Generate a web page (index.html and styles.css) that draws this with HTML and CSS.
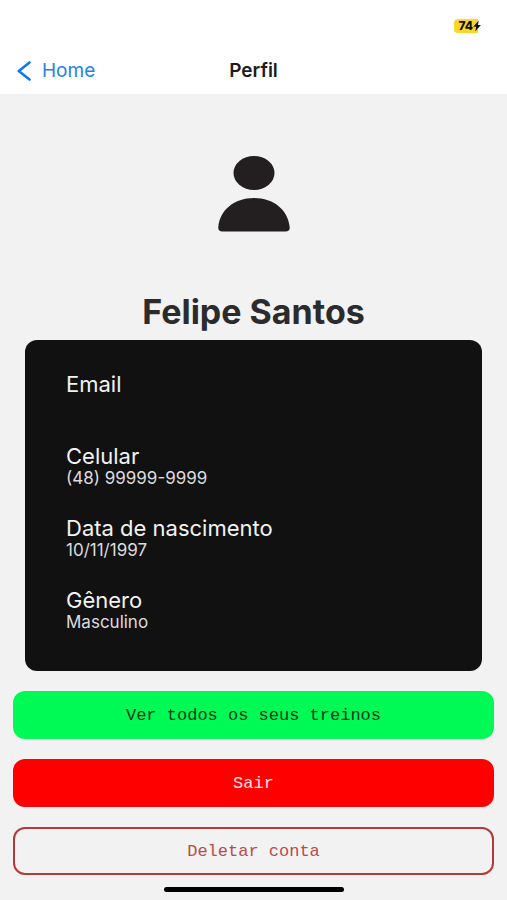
FILE: index.html
```
<!DOCTYPE html>
<html lang="pt-BR">
<head>
  <meta charset="UTF-8">
  <meta name="viewport" content="width=device-width, initial-scale=1.0">
  <title>Perfil</title>
  <link rel="stylesheet" href="styles.css">
</head>
<body>
  <header class="top">
    <div class="status-bar">
      <div class="battery">
        <span class="battery-level">74</span>
        <svg class="battery-bolt" viewBox="0 0 8 12" aria-hidden="true">
          <path d="M5.8 0.6 L0.2 6.8 H3.2 L2.2 11.4 L7.9 5 H4.9 Z" fill="#111"/>
        </svg>
      </div>
    </div>
    <nav class="nav-bar">
      <a class="back-link" href="#home">
        <svg class="back-icon" viewBox="0 0 14 20" aria-hidden="true">
          <path d="M12.5 1.5 L1.8 10 L12.5 18.5" fill="none" stroke="#0b7bea" stroke-width="2.6" stroke-linecap="round" stroke-linejoin="round"/>
        </svg>
        Home
      </a>
      <h1 class="nav-title">Perfil</h1>
    </nav>
  </header>

  <main class="profile">
    <svg class="avatar" viewBox="0 0 72 76" role="img" aria-label="Foto de perfil">
      <ellipse cx="36" cy="17" rx="20.5" ry="17" fill="#231f20"/>
      <path d="M36 42 C16 42 2 54 0.3 71 C0 74 1.5 75.5 4.5 75.5 H67.5 C70.5 75.5 72 74 71.7 71 C70 54 56 42 36 42 Z" fill="#231f20"/>
    </svg>
    <h2 class="name">Felipe Santos</h2>

    <dl class="info-card">
      <div class="info-item">
        <dt>Email</dt>
        <dd></dd>
      </div>
      <div class="info-item">
        <dt>Celular</dt>
        <dd>(48) 99999-9999</dd>
      </div>
      <div class="info-item">
        <dt>Data de nascimento</dt>
        <dd>10/11/1997</dd>
      </div>
      <div class="info-item">
        <dt>Gênero</dt>
        <dd>Masculino</dd>
      </div>
    </dl>

    <div class="actions">
      <button type="button" class="btn btn-workouts">Ver todos os seus treinos</button>
      <button type="button" class="btn btn-logout">Sair</button>
      <button type="button" class="btn btn-delete">Deletar conta</button>
    </div>
  </main>

  <div class="home-indicator"></div>
</body>
</html>
```

FILE: styles.css
```
* {
  box-sizing: border-box;
}

body {
  margin: 0;
  min-height: 100vh;
  display: flex;
  flex-direction: column;
  background: #f2f2f2;
  color: #2b2b2d;
  font-family: Inter, 'Liberation Sans', sans-serif;
}

/* Header */
.top {
  background: #fff;
}

.status-bar {
  display: flex;
  justify-content: flex-end;
  padding: 19px 26px 0;
}

.battery {
  display: flex;
  align-items: center;
  height: 14px;
  padding-left: 4px;
  background: linear-gradient(to right, #fbd62b 24px, transparent 24px);
  border-radius: 4px;
}

.battery-level {
  color: #111;
  font-size: 12px;
  font-weight: 800;
  line-height: 14px;
}

.battery-bolt {
  width: 8px;
  height: 12px;
}

.nav-bar {
  display: grid;
  grid-template-columns: 1fr auto 1fr;
  align-items: center;
  padding: 26px 17px 11px;
}

.back-link {
  display: flex;
  align-items: center;
  gap: 11px;
  color: #2583e2;
  font-size: 19px;
  line-height: 24px;
  text-decoration: none;
}

.back-icon {
  width: 14px;
  height: 20px;
}

.nav-title {
  margin: 0;
  color: #1c1c1e;
  font-size: 19px;
  font-weight: 600;
  line-height: 24px;
}

/* Profile */
.profile {
  display: flex;
  flex-direction: column;
  align-items: center;
  padding: 62px 13px 0;
}

.avatar {
  width: 72px;
  height: 76px;
}

.name {
  margin: 60px 0 8px;
  font-size: 34px;
  font-weight: 700;
  line-height: 40px;
}

.info-card {
  display: flex;
  flex-direction: column;
  gap: 28px;
  align-self: stretch;
  margin: 0 12px;
  padding: 32px 41px 39px;
  background: #111;
  border-radius: 12px;
}

.info-item dt {
  color: #f2f2f2;
  font-size: 22px;
  line-height: 24px;
}

.info-item dd {
  margin: 0;
  min-height: 20px;
  color: #dcdcdc;
  font-size: 17px;
  line-height: 20px;
}

/* Buttons */
.actions {
  display: flex;
  flex-direction: column;
  gap: 20px;
  align-self: stretch;
  margin-top: 20px;
}

.btn {
  height: 48px;
  border: none;
  border-radius: 12px;
  font-family: 'Liberation Mono', monospace;
  font-size: 17px;
  cursor: pointer;
}

.btn:hover {
  opacity: 0.9;
}

.btn-workouts {
  background: #00fa55;
  color: #0c3a18;
}

.btn-logout {
  background: #ff0000;
  color: #ffe0e0;
}

.btn-delete {
  background: transparent;
  border: 2px solid #b23a3a;
  color: #b84a4a;
}

.home-indicator {
  width: 180px;
  height: 5px;
  margin: auto auto 8px;
  background: #000;
  border-radius: 3px;
}
```
